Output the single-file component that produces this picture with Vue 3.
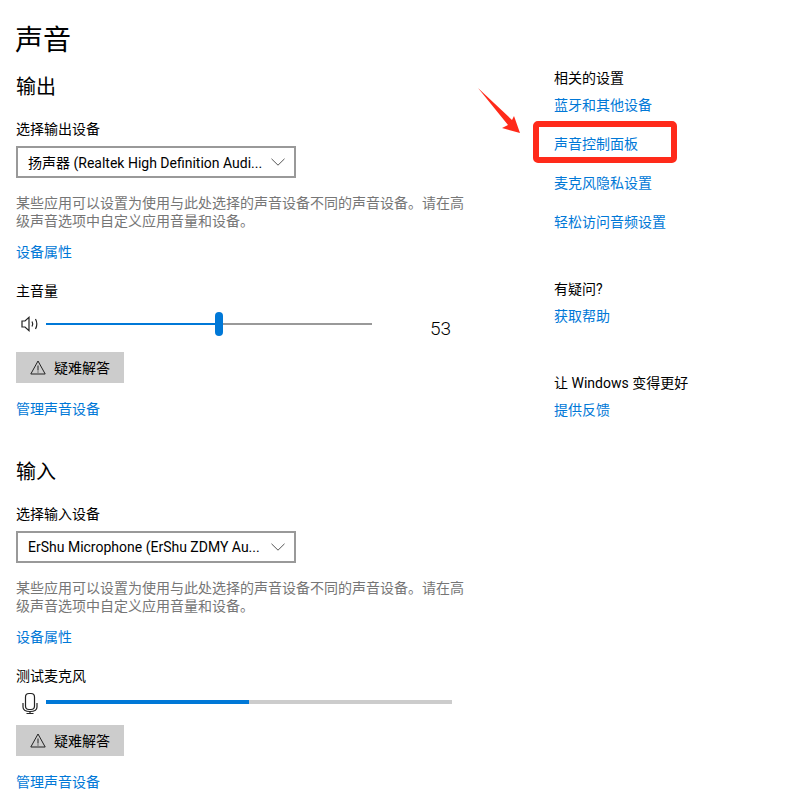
<script setup>
const volume = 53
const micLevel = 50
const relatedLinks = ['蓝牙和其他设备', '声音控制面板', '麦克风隐私设置', '轻松访问音频设置']
const hint = '某些应用可以设置为使用与此处选择的声音设备不同的声音设备。请在高级声音选项中自定义应用音量和设备。'
</script>

<template>
  <div class="page">
    <main class="main">
      <h1 class="title">声音</h1>

      <h2 class="section-title">输出</h2>
      <div class="label">选择输出设备</div>
      <div class="select">
        <span class="select-text">扬声器 (Realtek High Definition Audi...</span>
        <svg class="chevron" width="14" height="8" viewBox="0 0 14 8"><path d="M.5.8 7 7.2 13.5.8" fill="none" stroke="#555" /></svg>
      </div>
      <p class="hint">{{ hint }}</p>
      <a class="link prop-link">设备属性</a>
      <div class="label volume-label">主音量</div>
      <div class="slider-row">
        <svg class="speaker" width="18" height="16" viewBox="0 0 18 16">
          <path d="M1 5h3l4-3.6v13.2L4 11H1z" fill="none" stroke="#222" stroke-width="1.2" />
          <path d="M11 5.5c.9 1.5.9 3.5 0 5M14.5 3c1.6 3 1.6 7 0 10" fill="none" stroke="#222" stroke-width="1.2" />
        </svg>
        <div class="slider">
          <div class="slider-fill" :style="{ width: volume + '%' }"></div>
          <div class="slider-thumb"></div>
        </div>
        <span class="value">{{ volume }}</span>
      </div>
      <button class="trouble-btn vol-btn">
        <svg width="16" height="15" viewBox="0 0 16 15">
          <path d="M8 1 15.2 14H.8z" fill="none" stroke="#222" />
          <path d="M8 5.5v5M8 11.5v1" stroke="#222" />
        </svg>
        <span>疑难解答</span>
      </button>
      <a class="link manage-link">管理声音设备</a>

      <h2 class="section-title input-title">输入</h2>
      <div class="label">选择输入设备</div>
      <div class="select">
        <span class="select-text">ErShu Microphone (ErShu ZDMY Au...</span>
        <svg class="chevron" width="14" height="8" viewBox="0 0 14 8"><path d="M.5.8 7 7.2 13.5.8" fill="none" stroke="#555" /></svg>
      </div>
      <p class="hint">{{ hint }}</p>
      <a class="link prop-link">设备属性</a>
      <div class="label volume-label">测试麦克风</div>
      <div class="mic-row">
        <svg class="mic" width="16" height="22" viewBox="0 0 16 22">
          <rect x="3.5" y="1.5" width="9" height="16" rx="3.5" fill="none" stroke="#222" stroke-width="1.2" />
          <path d="M1 11v4c0 3 2.5 4.5 7 4.5s7-1.500 7-4.500v-4M8 19.500v2M4.500 21.500h7" fill="none" stroke="#222" stroke-width="1.2" />
        </svg>
        <div class="meter">
          <div class="meter-fill" :style="{ width: micLevel + '%' }"></div>
        </div>
      </div>
      <button class="trouble-btn mic-btn">
        <svg width="16" height="15" viewBox="0 0 16 15">
          <path d="M8 1 15.2 14H.8z" fill="none" stroke="#222" />
          <path d="M8 5.5v5M8 11.5v1" stroke="#222" />
        </svg>
        <span>疑难解答</span>
      </button>
      <a class="link manage-link">管理声音设备</a>
    </main>

    <aside class="aside">
      <div class="aside-title">相关的设置</div>
      <a v-for="item in relatedLinks" :key="item" class="link related">{{ item }}</a>

      <div class="aside-title group-title">有疑问?</div>
      <a class="link group-link">获取帮助</a>

      <div class="aside-title group-title">让 Windows 变得更好</div>
      <a class="link group-link">提供反馈</a>
    </aside>

    <!-- annotation drawn over the screenshot -->
    <div class="mark-box"></div>
    <svg class="mark-arrow" width="46" height="48" viewBox="0 0 46 48">
      <polygon points="1,1 35,33 37,29 43,46 25,41 31,38" fill="#ff2a1a" />
    </svg>
  </div>
</template>

<style>
html, body {
  background: #fff;
}
</style>

<style scoped>
.page {
  position: relative;
  display: flex;
  width: 810px;
  height: 812px;
  overflow: hidden;
  background: #fff;
  color: #000;
  font-family: Roboto, "Noto Sans CJK SC", sans-serif;
  font-size: 14px;
}

.main {
  width: 448px;
  margin-left: 16px;
  padding-top: 21px;
}

.title {
  margin: 0 0 0 -1px;
  font-size: 28px;
  font-weight: 400;
  line-height: 40px;
}

.section-title {
  margin: 12px 0 0;
  font-size: 20px;
  font-weight: 400;
  line-height: 28px;
}

.input-title {
  margin-top: 39px;
}

.label {
  margin-top: 18px;
  line-height: 20px;
}

.volume-label {
  margin-top: 19px;
}

.select {
  display: flex;
  align-items: center;
  justify-content: space-between;
  box-sizing: border-box;
  width: 280px;
  height: 32px;
  margin-top: 7px;
  padding: 0 9px 0 10px;
  border: 2px solid #999;
}

.select-text {
  white-space: nowrap;
}

.hint {
  margin: 16px 0 0;
  color: #767676;
  line-height: 18px;
}

.link {
  display: block;
  color: #0078d7;
  line-height: 20px;
  cursor: pointer;
}

.prop-link {
  margin-top: 12px;
}

.manage-link {
  margin-top: 16px;
}

.slider-row {
  display: flex;
  align-items: center;
  height: 24px;
  margin-top: 11px;
}

.speaker {
  flex: none;
  margin-left: 5px;
}

.slider {
  position: relative;
  width: 326px;
  height: 2px;
  margin-left: 7px;
  background: #999;
}

.slider-fill {
  height: 100%;
  background: #0078d7;
}

.slider-thumb {
  position: absolute;
  left: 169px;
  top: -11px;
  width: 8px;
  height: 24px;
  border-radius: 4px;
  background: #0078d7;
}

.value {
  margin: 9px 0 0 58px;
  font-size: 19px;
  font-weight: 300;
  line-height: 24px;
  color: #000;
}

.trouble-btn {
  display: flex;
  align-items: center;
  gap: 8px;
  width: 108px;
  height: 31px;
  padding: 0 0 0 14px;
  border: 0;
  background: #ccc;
  color: #000;
  font: inherit;
  line-height: 20px;
}

.vol-btn {
  margin-top: 16px;
}

.mic-btn {
  margin-top: 11px;
}

.mic-row {
  display: flex;
  align-items: center;
  height: 22px;
  margin-top: 6px;
}

.mic {
  flex: none;
  margin-left: 6px;
}

.meter {
  width: 406px;
  height: 4px;
  margin: -2px 0 0 8px;
  background: #ccc;
}

.meter-fill {
  height: 100%;
  background: #0078d7;
}

.aside {
  margin-left: 90px;
  padding-top: 68px;
}

.aside-title {
  line-height: 20px;
  white-space: nowrap;
}

.related {
  margin-top: 19px;
}

.aside-title + .related {
  margin-top: 7px;
}

.group-title {
  margin-top: 47px;
}

.group-link {
  margin-top: 7px;
}

.mark-box {
  position: absolute;
  left: 533px;
  top: 121px;
  box-sizing: border-box;
  width: 144px;
  height: 42px;
  border: 6px solid #ff2a1a;
  border-radius: 5px;
}

.mark-arrow {
  position: absolute;
  left: 477px;
  top: 87px;
}
</style>
